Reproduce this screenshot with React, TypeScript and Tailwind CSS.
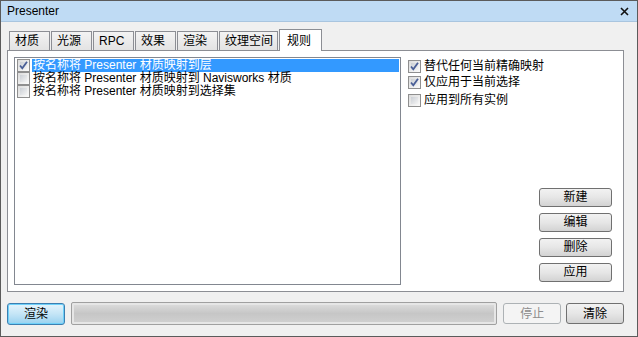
import React from 'react';

const font = { fontFamily: '"Liberation Sans", "Noto Sans CJK SC", sans-serif' };

const CheckBox = ({ checked }: { checked?: boolean }) => (
  <span className="relative inline-block w-[13px] h-[13px] shrink-0 border border-[#8f8f8f] bg-gradient-to-br from-[#dcdcdc] to-[#fbfbfb]">
    <span className="absolute inset-[2px] bg-gradient-to-br from-[#cbcfd5] to-[#f4f4f4]" />
    {checked && (
      <svg className="absolute inset-0" width="11" height="11" viewBox="0 0 11 11">
        <path d="M2 5.5 L4.3 8.3 L9 1.8" fill="none" stroke="#4a5f97" strokeWidth="1.8" />
      </svg>
    )}
  </span>
);

const tabs = ['材质', '光源', 'RPC', '效果', '渲染', '纹理空间'];

const ListRow = ({ text, selected, checked }: { text: string; selected?: boolean; checked?: boolean }) => (
  <div className="flex items-center h-[13px] gap-[2px]">
    <CheckBox checked={checked} />
    <span className={`flex-1 h-[13px] leading-[13px] whitespace-nowrap pl-[1px] ${selected ? 'bg-[#3399ff] text-white' : 'text-black'}`}>{text}</span>
  </div>
);

const SideButton = ({ label }: { label: string }) => (
  <button className="w-[73px] h-[19px] rounded-[3px] border border-[#707070] bg-gradient-to-b from-[#f2f2f2] via-[#e6e6e6] to-[#d3d3d3] text-[12px] leading-[17px] text-black">
    {label}
  </button>
);

export default function App() {
  return (
    <div className="w-[638px] h-[337px] bg-[#f0f0f0] border border-[#5b5b5b] flex flex-col text-[12px] text-black" style={font}>
      {/* title bar */}
      <div className="h-[21px] flex items-center justify-between bg-[#bfdbf4] border-b border-[#a9c5df] pl-[6px] pr-[8px]">
        <span className="text-[12px]">Presenter</span>
        <svg width="9" height="9" viewBox="0 0 9 9">
          <path d="M1 1 L8 8 M8 1 L1 8" stroke="#111" strokeWidth="1.6" />
        </svg>
      </div>

      <div className="pl-[6px] pr-[13px] pt-[6px] flex flex-col">
        {/* tabs */}
        <div className="flex items-end h-[22px] pl-[2px] relative z-10">
          {tabs.map((t) => (
            <div key={t} className="h-[19px] min-w-[41px] mr-[1px] pl-[5px] pr-[4px] border border-b-0 border-[#8c8e94] bg-gradient-to-b from-[#f3f3f3] to-[#e3e3e3] flex items-center leading-none whitespace-nowrap">
              {t}
            </div>
          ))}
          <div className="h-[22px] min-w-[43px] -mb-[1px] pl-[7px] border border-b-0 border-[#8c8e94] bg-white flex items-center leading-none">
            规则
          </div>
        </div>

        {/* tab panel */}
        <div className="h-[242px] border border-[#8c8e94] bg-white flex p-[6px] pr-[11px]">
          <div className="w-[387px] h-[228px] border border-[#828790] bg-white pl-[2px] pr-[1px] pt-[1px] flex flex-col">
            <ListRow text="按名称将 Presenter 材质映射到层" selected checked />
            <ListRow text="按名称将 Presenter 材质映射到 Navisworks 材质" />
            <ListRow text="按名称将 Presenter 材质映射到选择集" />
          </div>
          <div className="flex-1 pl-[7px] flex flex-col">
            <div className="flex flex-col gap-[2px] pt-[2px]">
              <div className="flex items-center gap-[3px] h-[14px]"><CheckBox checked /><span>替代任何当前精确映射</span></div>
              <div className="flex items-center gap-[3px] h-[14px]"><CheckBox checked /><span>仅应用于当前选择</span></div>
              <div className="flex items-center gap-[3px] h-[16px] pt-[2px]"><CheckBox /><span>应用到所有实例</span></div>
            </div>
            <div className="flex-1" />
            <div className="flex flex-col items-end gap-[6px] pb-[3px]">
              <SideButton label="新建" />
              <SideButton label="编辑" />
              <SideButton label="删除" />
              <SideButton label="应用" />
            </div>
          </div>
        </div>

        {/* bottom bar */}
        <div className="flex items-center mt-[10px] h-[23px]">
          <button className="w-[58px] h-[22px] rounded-[3px] border border-[#3c7fb1] bg-gradient-to-b from-[#e5f4fc] via-[#c4e5f6] to-[#98d1ef] shadow-[inset_0_0_0_1px_#6ed0f9] text-[12px]">
            渲染
          </button>
          <div className="ml-[6px] w-[427px] h-[23px] rounded-[2px] border border-[#a0a0a0] bg-[#e6e6e6] p-[2px]">
            <div className="w-full h-full bg-gradient-to-b from-[#dadada] via-[#c6c6c6] to-[#cfcfcf]" />
          </div>
          <button className="ml-[6px] w-[58px] h-[21px] rounded-[3px] border border-[#adb2b5] bg-[#f4f4f4] text-[#8d8d8d] text-[12px]">
            停止
          </button>
          <button className="ml-[5px] w-[58px] h-[21px] rounded-[3px] border border-[#707070] bg-gradient-to-b from-[#f2f2f2] via-[#e6e6e6] to-[#d3d3d3] text-[12px]">
            清除
          </button>
        </div>
      </div>
    </div>
  );
}
